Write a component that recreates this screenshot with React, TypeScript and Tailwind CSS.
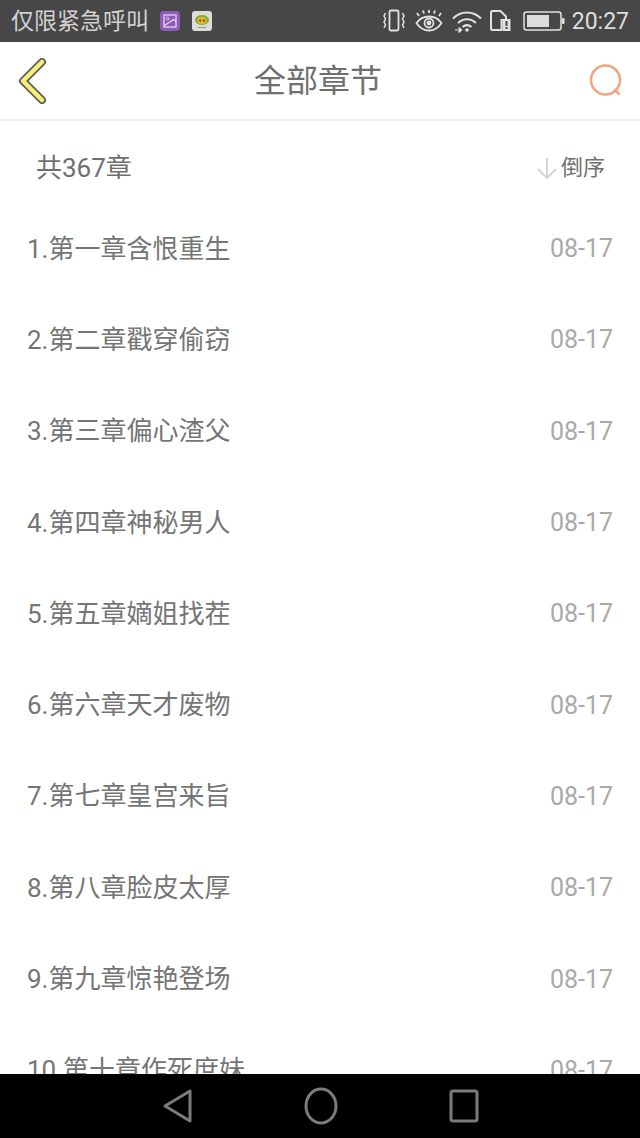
const chapters = [
  "1.第一章含恨重生",
  "2.第二章戳穿偷窃",
  "3.第三章偏心渣父",
  "4.第四章神秘男人",
  "5.第五章嫡姐找茬",
  "6.第六章天才废物",
  "7.第七章皇宫来旨",
  "8.第八章脸皮太厚",
  "9.第九章惊艳登场",
  "10.第十章作死庶妹",
];

function StatusIcons() {
  return (
    <div className="flex items-center">
      {/* vibrate */}
      <svg width="24" height="24" viewBox="0 0 24 24" fill="none" stroke="#e2e2e2" className="ml-0 block">
        <rect x="7.5" y="1.5" width="9" height="20" rx="1.5" strokeWidth="1.8" />
        <path d="M3.5 4 2 7l1.5 3L2 13l1.5 3L2 19M20.500 4 22 7l-1.500 3 1.500 3-1.500 3 1.500 3" strokeWidth="1.500" />
      </svg>
      {/* eye */}
      <svg width="30" height="24" viewBox="0 0 30 24" fill="none" stroke="#e2e2e2" strokeWidth="1.800" className="ml-[8px] block">
        <path d="M2.500 14C6 9 10 7.500 15 7.500S24 9 27.500 14C24 19.500 20 21.500 15 21.500S6 19.500 2.500 14Z" />
        <circle cx="15" cy="14" r="4.500" />
        <circle cx="15" cy="14" r="1.500" fill="#e2e2e2" />
        <path d="M5 7 3 4M10 4.500 9 1.500M15 4V1M20 4.500l1-3M25 7l2-3" />
      </svg>
      {/* wifi */}
      <svg width="32" height="24" viewBox="0 0 32 24" fill="none" stroke="#e2e2e2" strokeWidth="2" className="ml-[7px] block">
        <path d="M2 9.500C10 1.500 22 1.500 30 9.500M7 14c5.500-5 12.500-5 18 0M11.500 18c3-2.500 6-2.500 9 0" />
        <circle cx="16" cy="21" r="1.800" fill="#e2e2e2" stroke="none" />
        <path d="M4 21h3.500M8 18.500v5L11 21Z" strokeWidth="1" fill="#e2e2e2" />
      </svg>
      {/* sim */}
      <svg width="22" height="24" viewBox="0 0 22 24" className="ml-[7px] block">
        <path d="M1 3.500A1.500 1.500 0 0 1 2.500 2h8L16 7.500V11h-4.500v10h-9A1.500 1.500 0 0 1 1 19.500Z" fill="none" stroke="#e2e2e2" strokeWidth="2" />
        <rect x="12.500" y="10" width="8" height="12" fill="#e2e2e2" />
        <rect x="15.500" y="12" width="2" height="5" fill="#474747" />
        <rect x="15.500" y="18" width="2" height="2" fill="#474747" />
      </svg>
      {/* battery */}
      <svg width="42" height="22" viewBox="0 0 42 22" className="ml-[11px] block">
        <rect x="1" y="2" width="37" height="18" rx="2.500" fill="none" stroke="#e2e2e2" strokeWidth="1.500" />
        <rect x="4" y="5" width="22" height="12" fill="#dcdcdc" />
        <rect x="39" y="8" width="2.500" height="6" rx="1" fill="#e2e2e2" />
      </svg>
    </div>
  );
}

function FlowerIcon() {
  return (
    <svg width="20" height="20" viewBox="0 0 20 20" className="ml-[12px] block">
      <rect width="20" height="20" rx="3" fill="#dcdcd6" />
      <ellipse cx="10" cy="9" rx="7" ry="5" fill="#7fae3c" />
      <ellipse cx="10" cy="9.500" rx="4.500" ry="3.500" fill="#e8b81e" />
      <circle cx="8.200" cy="9.500" r="1" fill="#4a3a18" />
      <circle cx="11.800" cy="9.500" r="1" fill="#4a3a18" />
      <path d="M6 16.500h8" stroke="#9a9a94" strokeWidth="1" />
    </svg>
  );
}

function GalleryIcon() {
  return (
    <svg width="20" height="20" viewBox="0 0 20 20" className="ml-[11px] block">
      <rect width="20" height="20" rx="4" fill="#8f5ab8" />
      <rect x="4" y="4" width="12" height="12" fill="none" stroke="#e4d6ee" strokeWidth="1.300" />
      <circle cx="7.500" cy="7.500" r="1.300" fill="none" stroke="#e4d6ee" />
      <path d="m4.500 14.500 9-6 2.500 2" fill="none" stroke="#e4d6ee" strokeWidth="1.300" />
    </svg>
  );
}

export default function App() {
  return (
    <div className="flex h-[1138px] w-[640px] flex-col overflow-hidden bg-white font-['Roboto','Noto_Sans_CJK_SC',sans-serif]">
      <div className="flex h-[42px] shrink-0 items-center justify-between bg-[#474747] pl-[11px] pr-[11px] text-[#dedede]">
        <div className="flex items-center">
          <span className="text-[23px] leading-none text-[#d2d2d2]">仅限紧急呼叫</span>
          <GalleryIcon />
          <FlowerIcon />
        </div>
        <div className="flex items-center">
          <StatusIcons />
          <span className="ml-[7px] text-[23px] leading-none">20:27</span>
        </div>
      </div>

      <header className="flex h-[79px] shrink-0 items-center justify-between border-b-2 border-[#eeeeee] pl-[18px] pr-[16px]">
        <svg width="30" height="46" viewBox="0 0 30 46" className="block">
          <path d="M24 4 5 23l19 19" fill="none" stroke="#5f5f55" strokeWidth="8" strokeLinecap="round" strokeLinejoin="round" />
          <path d="M24 4 5 23l19 19" fill="none" stroke="#f7ef7c" strokeWidth="4.500" strokeLinecap="round" strokeLinejoin="round" />
        </svg>
        <h1 className="text-[32px] font-normal leading-none text-[#6f6f6f]">全部章节</h1>
        <svg width="36" height="36" viewBox="0 0 36 36" fill="none" stroke="#f2a57f" strokeWidth="2.500" className="block">
          <circle cx="17.500" cy="17" r="14.500" />
          <path d="m27 27 4 4" strokeLinecap="round" />
        </svg>
      </header>

      <main className="min-h-0 flex-1 overflow-hidden">
        <div className="flex h-[82px] items-center justify-between pl-[36px] pr-[35px] pt-[11px]">
          <span className="text-[26px] leading-none text-[#6f6f6f]">共367章</span>
          <div className="flex items-center">
            <svg width="22" height="24" viewBox="0 0 22 24" fill="none" stroke="#d2d2d2" strokeWidth="1.800" className="block">
              <path d="M11 2v20M2 13l9 9 9-9" />
            </svg>
            <span className="ml-[3px] text-[22px] leading-none text-[#6f6f6f]">倒序</span>
          </div>
        </div>
        <ul>
          {chapters.map((title) => (
            <li key={title} className="flex h-[91.3px] items-center justify-between pl-[27px] pr-[27px]">
              <span className="text-[26px] leading-none text-[#757575]">{title}</span>
              <span className="text-[25px] leading-none text-[#a9a9a9]">08-17</span>
            </li>
          ))}
        </ul>
      </main>

      <nav className="flex h-[64px] shrink-0 items-center justify-center bg-black">
        <svg width="32" height="36" viewBox="0 0 32 36" fill="none" stroke="#7b7b7b" strokeWidth="3" strokeLinejoin="round" className="mr-[110px] block">
          <path d="M28 3v30L3 18Z" />
        </svg>
        <svg width="34" height="38" viewBox="0 0 34 38" fill="none" stroke="#7b7b7b" strokeWidth="3" className="block">
          <ellipse cx="17" cy="19" rx="15" ry="17" />
        </svg>
        <svg width="30" height="34" viewBox="0 0 30 34" fill="none" stroke="#7b7b7b" strokeWidth="3" className="ml-[111px] block">
          <rect x="2" y="2" width="26" height="30" rx="2" />
        </svg>
      </nav>
    </div>
  );
}
